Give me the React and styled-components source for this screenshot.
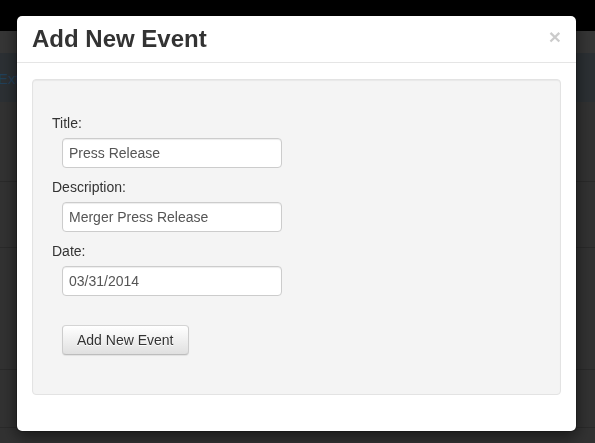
import React from "react";
import styled, { createGlobalStyle } from "styled-components";

const Global = createGlobalStyle`
  html, body { margin: 0; padding: 0; }
  body {
    background: #323232;
    font-family: "Liberation Sans", Arial, sans-serif;
    font-size: 14px;
    line-height: 20px;
    color: #333;
    overflow: hidden;
  }
  * { box-sizing: border-box; }
`;

/* ---- page behind the modal (dimmed) ---- */
const Page = styled.div`
  width: 595px;
  height: 443px;
  display: flex;
  flex-direction: column;
  background: #323232;
`;

const Navbar = styled.div`
  height: 31px;
  background: #000;
`;

const SubBar = styled.div`
  height: 22px;
  background: #363636;
`;

const TabBar = styled.div`
  height: 49px;
  background: #2c3034;
  display: flex;
  align-items: center;
  color: #21405a;
  font-size: 15px;
  span { margin-left: -2px; margin-top: 2px; }
`;

const Row = styled.div`
  height: ${(p) => p.$h}px;
  border-bottom: 1px solid #2a2a2a;
`;

/* ---- modal ---- */
const Dialog = styled.div`
  position: fixed;
  top: 15px;
  left: 16px;
  width: 561px;
  background: #fff;
  border: 1px solid rgba(0, 0, 0, 0.2);
  border-radius: 6px;
  box-shadow: 0 5px 15px rgba(0, 0, 0, 0.5);
  background-clip: padding-box;
`;

const Header = styled.div`
  display: flex;
  justify-content: space-between;
  align-items: flex-start;
  padding: 10px 15px;
  border-bottom: 1px solid #e5e5e5;
`;

const Title = styled.h3`
  margin: 0;
  font-family: "Liberation Sans", Arial, sans-serif;
  font-size: 24px;
  font-weight: 700;
  line-height: 26px;
  color: #333;
`;

const Close = styled.button`
  border: 0;
  background: transparent;
  padding: 0;
  font-family: "Liberation Sans", Arial, sans-serif;
  font-size: 21px;
  font-weight: 700;
  line-height: 21px;
  color: #000;
  opacity: 0.2;
  text-shadow: 0 1px 0 #fff;
  cursor: pointer;
`;

const Body = styled.div`
  padding: 16px 15px 16px;
`;

const Well = styled.div`
  background: #f4f4f4;
  border: 1px solid #e3e3e3;
  border-radius: 4px;
  box-shadow: inset 0 1px 1px rgba(0, 0, 0, 0.05);
  padding: 19px;
  margin-bottom: 20px;
`;

const Form = styled.form`
  display: flex;
  flex-direction: column;
  align-items: flex-start;
  padding-top: 14px;
`;

const Label = styled.label`
  display: block;
  font-size: 14px;
  line-height: 20px;
  color: #333;
  margin-bottom: 5px;
  margin-top: ${(p) => (p.$first ? 0 : 9)}px;
`;

const Input = styled.input`
  margin-left: 10px;
  width: 220px;
  height: 30px;
  padding: 0 6px;
  border: 1px solid #ccc;
  border-radius: 4px;
  box-shadow: inset 0 1px 1px rgba(0, 0, 0, 0.075);
  background: #fff;
  font-family: "Liberation Sans", Arial, sans-serif;
  font-size: 14px;
  color: #555;
  outline: none;
`;

const Button = styled.button`
  margin: 29px 0 20px 10px;
  height: 30px;
  padding: 0 14px;
  font-family: "Liberation Sans", Arial, sans-serif;
  font-size: 14px;
  color: #333;
  background-image: linear-gradient(to bottom, #fff 0%, #e0e0e0 100%);
  border: 1px solid #ccc;
  border-color: #d4d4d4 #ccc #bdbdbd;
  border-radius: 4px;
  text-shadow: 0 1px 0 #fff;
  box-shadow: inset 0 1px 0 rgba(255, 255, 255, 0.15), 0 1px 1px rgba(0, 0, 0, 0.075);
  cursor: pointer;
`;

const fields = [
  { label: "Title:", value: "Press Release" },
  { label: "Description:", value: "Merger Press Release" },
  { label: "Date:", value: "03/31/2014" },
];

export default function App() {
  return (
    <>
      <Global />
      <Page>
        <Navbar />
        <SubBar />
        <TabBar>
          <span>Extended</span>
        </TabBar>
        <Row $h={80} />
        <Row $h={66} />
        <Row $h={122} />
        <Row $h={58} />
      </Page>
      <Dialog>
        <Header>
          <Title>Add New Event</Title>
          <Close type="button">×</Close>
        </Header>
        <Body>
          <Well>
            <Form onSubmit={(e) => e.preventDefault()}>
              {fields.map((f, i) => (
                <React.Fragment key={f.label}>
                  <Label $first={i === 0}>{f.label}</Label>
                  <Input type="text" defaultValue={f.value} />
                </React.Fragment>
              ))}
              <Button type="submit">Add New Event</Button>
            </Form>
          </Well>
        </Body>
      </Dialog>
    </>
  );
}
